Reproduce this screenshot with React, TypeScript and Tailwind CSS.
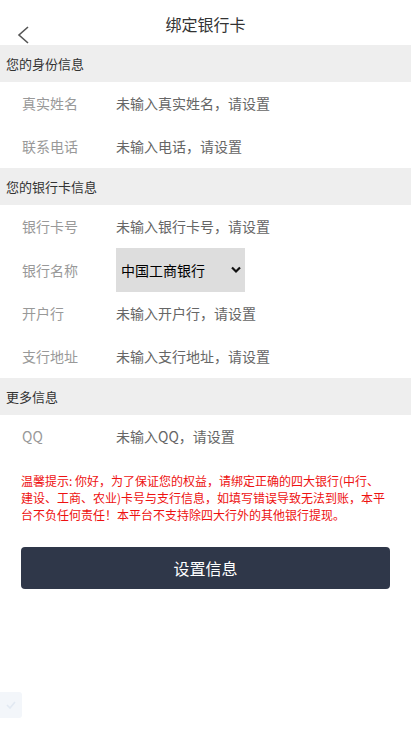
import React, { useState } from 'react'

const font = { fontFamily: '"Noto Sans CJK SC", "Noto Sans", sans-serif' }

const SectionTitle = ({ title }: { title: string }) => (
  <div className="h-[37px] flex items-center pl-[6px] bg-[#eeeeee] text-[13px] text-[#333333]">
    {title}
  </div>
)

const Row = ({ label, value }: { label: string; value: string }) => (
  <div className="h-[43px] flex items-center text-[14px]">
    <span className="w-[116px] pl-[22px] text-[#999999]">{label}</span>
    <span className="text-[#666666]">{value}</span>
  </div>
)

export default function App() {
  const [bank, setBank] = useState('中国工商银行')

  return (
    <div className="relative min-h-[731px] bg-white" style={font}>
      {/* 顶部 */}
      <div className="relative h-[45px] flex justify-center pt-[12px]">
        <button className="absolute left-[14px] top-[23px] p-[2px]">
          <svg width="14" height="20" viewBox="0 0 14 20" fill="none">
            <path d="M12 2 L3 10 L12 18" stroke="#555555" strokeWidth="1.6" />
          </svg>
        </button>
        <span className="text-[16px] leading-[24px] text-[#333333]">绑定银行卡</span>
      </div>

      <SectionTitle title="您的身份信息" />
      <Row label="真实姓名" value="未输入真实姓名，请设置" />
      <Row label="联系电话" value="未输入电话，请设置" />

      <SectionTitle title="您的银行卡信息" />
      <Row label="银行卡号" value="未输入银行卡号，请设置" />
      <div className="h-[44px] flex items-center text-[14px]">
        <span className="w-[116px] pl-[22px] text-[#999999]">银行名称</span>
        <div className="relative w-[129px] h-[44px] bg-[#dddddd]">
          <select
            value={bank}
            onChange={(e) => setBank(e.target.value)}
            className="appearance-none w-full h-full bg-transparent pl-[5px] text-[14px] text-black outline-none"
          >
            <option>中国工商银行</option>
            <option>中国建设银行</option>
            <option>中国农业银行</option>
            <option>中国银行</option>
          </select>
          <svg className="absolute right-[3px] top-[18px] pointer-events-none" width="12" height="8" viewBox="0 0 12 8">
            <path d="M2 1.5 L6 5.5 L10 1.5" stroke="#111111" strokeWidth="2.2" fill="none" />
          </svg>
        </div>
      </div>
      <Row label="开户行" value="未输入开户行，请设置" />
      <Row label="支行地址" value="未输入支行地址，请设置" />

      <SectionTitle title="更多信息" />
      <Row label="QQ" value="未输入QQ，请设置" />

      <p className="px-[21px] pt-[14px] text-[12px] leading-[17px] text-[#ee1111]">
        温馨提示: 你好，为了保证您的权益，请绑定正确的四大银行(中行、建设、工商、农业)卡号与支行信息，如填写错误导致无法到账，本平台不负任何责任！本平台不支持除四大行外的其他银行提现。
      </p>

      <div className="px-[21px] pt-[24px]">
        <button className="w-full h-[42px] rounded-[4px] bg-[#2f3749] text-white text-[16px]">
          设置信息
        </button>
      </div>

      {/* 左下角浮标 */}
      <div className="absolute left-0 top-[692px] w-[22px] h-[26px] rounded-r-[3px] bg-[#f3f6fa] flex items-center justify-center">
        <svg width="10" height="8" viewBox="0 0 10 8">
          <path d="M1 4 L4 7 L9 1" stroke="#e2e9f2" strokeWidth="1.6" fill="none" />
        </svg>
      </div>
    </div>
  )
}
